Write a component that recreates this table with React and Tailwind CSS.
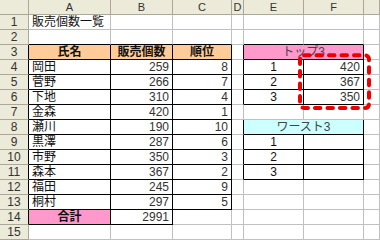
import React from 'react';

const COLS = ['A', 'B', 'C', 'D', 'E', 'F', 'G'];

const names = [
  ['岡田', 259, 8],
  ['菅野', 266, 7],
  ['下地', 310, 4],
  ['金森', 420, 1],
  ['瀬川', 190, 10],
  ['黒澤', 287, 6],
  ['市野', 350, 3],
  ['森本', 367, 2],
  ['福田', 245, 9],
  ['桐村', 297, 5],
];

// cell contents keyed by row -> col index (A = 1)
const cells = {
  1: { 1: { v: '販売個数一覧' } },
  3: {
    1: { v: '氏名', center: true, bold: true, bg: 'bg-[#ffcc99]' },
    2: { v: '販売個数', center: true, bold: true, bg: 'bg-[#ffcc99]' },
    3: { v: '順位', center: true, bold: true, bg: 'bg-[#ffcc99]' },
    5: { v: 'トップ3', center: true, bg: 'bg-[#ff99cc]', span: true, muted: true },
  },
  4: { 5: { v: 1, center: true }, 6: { v: 420, right: true } },
  5: { 5: { v: 2, center: true }, 6: { v: 367, right: true } },
  6: { 5: { v: 3, center: true }, 6: { v: 350, right: true } },
  8: { 5: { v: 'ワースト3', center: true, bg: 'bg-[#ccffff]', span: true, muted: true } },
  9: { 5: { v: 1, center: true } },
  10: { 5: { v: 2, center: true } },
  11: { 5: { v: 3, center: true } },
  14: {
    1: { v: '合計', center: true, bold: true, bg: 'bg-[#ff99cc]' },
    2: { v: 2991, right: true },
  },
};

names.forEach(([name, count, rank], i) => {
  const r = 4 + i;
  cells[r] = { ...(cells[r] || {}), 1: { v: name }, 2: { v: count, right: true }, 3: { v: rank, right: true } };
});

const boxed = (r, c) =>
  (r >= 3 && r <= 13 && c >= 1 && c <= 3) ||
  (r === 14 && c >= 1 && c <= 2) ||
  (r >= 3 && r <= 6 && c >= 5 && c <= 6) ||
  (r >= 9 && r <= 11 && c >= 5 && c <= 6);

const cyan = (r, c) => r === 8 && c >= 5 && c <= 6;

const gridCols = 'grid grid-cols-[29px_82px_62px_59px_12px_60px_60px_1fr]';

const App = () => {
  const rows = Array.from({ length: 15 }, (_, i) => i + 1);
  return (
    <div className="relative w-[380px] h-[240px] overflow-hidden bg-white text-[#111] font-['Liberation_Sans','Noto_Sans_CJK_JP',sans-serif] text-[12px] leading-[14px]">
      <div className={gridCols}>
        <div className="h-[15px] bg-[#ecead9] border-r border-b border-r-[#aca899] border-b-[#aca899]" />
        {COLS.map(c => (
          <div
            key={c}
            className="h-[15px] bg-[#ecead9] border-r border-b border-r-[#aca899] border-b-[#aca899] text-center text-[11px] text-[#333]"
          >
            {c === 'G' ? '' : c}
          </div>
        ))}
      </div>

      {rows.map(r => (
        <div key={r} className={gridCols}>
          <div
            className={
              'h-[15px] bg-[#ecead9] border-r border-b border-b-[#aca899] text-center text-[12px] text-[#333] ' +
              (boxed(r, 1) ? 'border-r-black' : 'border-r-[#aca899]')
            }
          >
            {r}
          </div>
          {COLS.map((_, i) => {
            const c = i + 1;
            if (c === 6 && cells[r] && cells[r][5] && cells[r][5].span) return null;
            const cell = (cells[r] && cells[r][c]) || {};
            const lastC = cell.span ? c + 1 : c;
            const rightBlack =
              boxed(r, lastC) || boxed(r, lastC + 1) || cyan(r, lastC) || cyan(r, lastC + 1);
            const bottomBlack = boxed(r, c) || boxed(r + 1, c) || cyan(r, c);
            return (
              <div
                key={c}
                className={
                  'h-[15px] px-[3px] border-r border-b whitespace-nowrap overflow-hidden ' +
                  (rightBlack ? 'border-r-black ' : 'border-r-[#c0c0c0] ') +
                  (bottomBlack ? 'border-b-black ' : 'border-b-[#c0c0c0] ') +
                  (cell.span ? 'col-span-2 ' : '') +
                  (cell.center ? 'text-center ' : cell.right ? 'text-right text-[#333] ' : '') +
                  (cell.bold ? 'font-bold ' : '') +
                  (cell.muted ? 'text-[#444] ' : '') +
                  (cell.bg || '')
                }
              >
                {cell.v}
              </div>
            );
          })}
        </div>
      ))}

      <svg className="absolute left-[296px] top-[51px] w-[77px] h-[61px]" viewBox="0 0 77 61">
        <rect
          x="4"
          y="4.3"
          width="69"
          height="52.7"
          rx="4"
          fill="none"
          stroke="#ee0000"
          strokeWidth="4"
          strokeDasharray="5.5 7"
          strokeLinecap="round"
        />
      </svg>
    </div>
  );
};

export default App;
